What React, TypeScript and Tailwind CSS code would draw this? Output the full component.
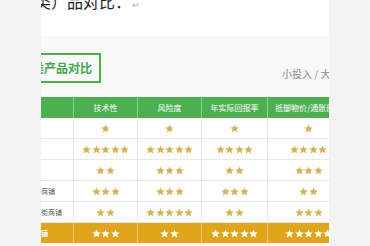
import React from 'react'

type Row = { label: string; stars: number[]; hot?: boolean }

const rows: Row[] = [
  { label: '股票', stars: [1, 1, 1, 1] },
  { label: '基金', stars: [5, 5, 4, 4] },
  { label: '黄金', stars: [2, 3, 2, 3] },
  { label: '一线城商铺', stars: [3, 3, 3, 2] },
  { label: '核心临街商铺', stars: [2, 5, 2, 3] },
  { label: '黄金旺铺', stars: [3, 2, 5, 5], hot: true },
]

const headers = ['技术性', '风险度', '年实际回报率']

function Stars({ n, color }: { n: number; color: string }) {
  return (
    <div className="flex items-center gap-[0.5px]">
      {Array.from({ length: n }).map((_, i) => (
        <svg key={i} width="9" height="9" viewBox="0 0 24 24" fill={color}>
          <polygon points="12,1 15.3,8.4 23.2,9.1 17.2,14.4 19,22.4 12,18.2 5,22.4 6.8,14.4 0.8,9.1 8.7,8.4" />
        </svg>
      ))}
    </div>
  )
}

export default function App() {
  return (
    <div className="flex h-[246px] w-[370px] overflow-hidden bg-[#f3f3f3] font-['Noto_Sans_CJK_SC',sans-serif]">
      <div className="w-[41px] shrink-0" />
      <div className="flex w-[288px] shrink-0 flex-col overflow-hidden bg-[#f8f8f8]">
        {/* clipped heading line */}
        <div className="h-[36px] shrink-0 overflow-hidden bg-white">
          <p className="-ml-[6px] -mt-[7px] whitespace-nowrap text-[16px] font-normal leading-[16px] text-[#222]">
            类）品对比：<span className="ml-[1px] text-[9px] text-[#b0b0b0]">↵</span>
          </p>
        </div>

        {/* title row */}
        <div className="mt-[17px] flex h-[30px] shrink-0 items-end">
          <div className="-ml-[60px] flex h-[30px] w-[120px] shrink-0 items-center justify-end whitespace-nowrap border-2 border-[#4caf50] pr-[7px] text-[12px] font-bold text-[#43a84f]">
            理财类产品对比
          </div>
          <span className="mb-[1px] ml-[181px] shrink-0 whitespace-nowrap text-[10px] font-medium leading-[16px] text-[#9a9a9a]">
            小投入 / 大收益
          </span>
        </div>

        {/* comparison table */}
        <div className="mt-[14px] grid w-[308px] shrink-0 grid-cols-[32px_64px_64px_66px_82px] text-[8px]">
          <div className="h-[21px] bg-[#4caf50]" />
          {headers.map((h) => (
            <div key={h} className="flex h-[21px] items-center justify-center border-l border-[#8fd39a] bg-[#4caf50] text-white">
              {h}
            </div>
          ))}
          <div className="flex h-[21px] items-center whitespace-nowrap border-l border-[#8fd39a] bg-[#4caf50] pl-[7px] text-white">
            抵御物价/通胀能力
          </div>

          {rows.map((r) => (
            <React.Fragment key={r.label}>
              <div
                className={
                  r.hot
                    ? 'flex h-[20px] items-center overflow-hidden bg-[#e1a51b]'
                    : 'flex h-[21px] items-center overflow-hidden border-b border-[#e8e8e8] bg-white'
                }
              >
                <span
                  className={
                    r.hot
                      ? '-ml-[21px] whitespace-nowrap text-[7px] font-bold text-white'
                      : '-ml-[21px] whitespace-nowrap text-[7px] text-[#555]'
                  }
                >
                  {r.label}
                </span>
              </div>
              {r.stars.map((s, i) => (
                <div
                  key={i}
                  className={
                    r.hot
                      ? 'flex h-[20px] items-center justify-center border-l border-[#eccb72] bg-[#e1a51b]'
                      : 'flex h-[21px] items-center justify-center border-b border-l border-[#e8e8e8] bg-white'
                  }
                >
                  <Stars n={s} color={r.hot ? '#ffffff' : '#d6b253'} />
                </div>
              ))}
            </React.Fragment>
          ))}
        </div>
      </div>
    </div>
  )
}
